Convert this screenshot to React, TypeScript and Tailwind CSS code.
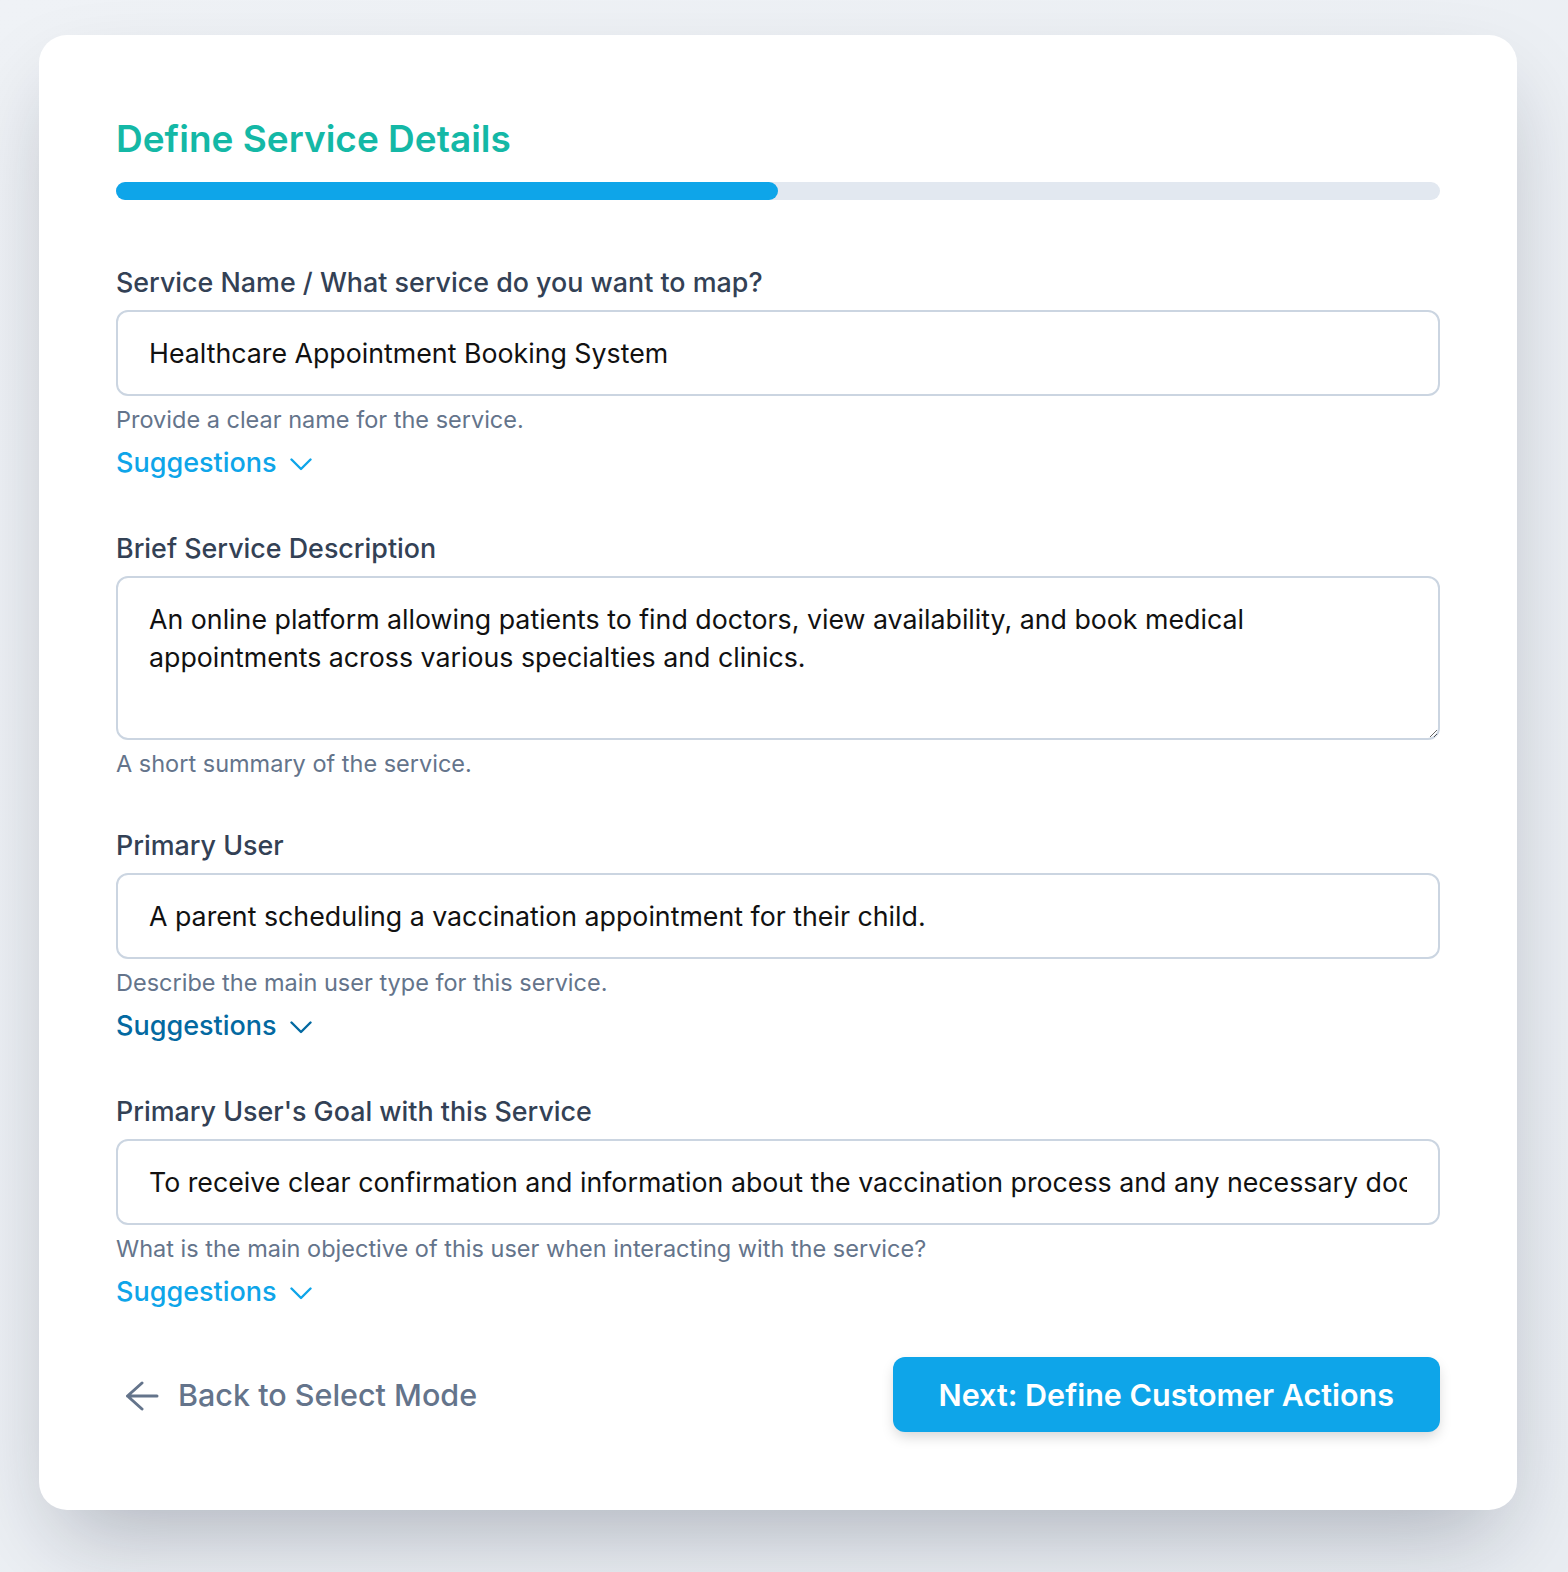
import { useState } from 'react';

type Field = {
  label: string;
  value: string;
  help: string;
  multiline?: boolean;
  suggestions?: 'light' | 'dark';
};

const fields: Field[] = [
  {
    label: 'Service Name / What service do you want to map?',
    value: 'Healthcare Appointment Booking System',
    help: 'Provide a clear name for the service.',
    suggestions: 'light',
  },
  {
    label: 'Brief Service Description',
    value:
      'An online platform allowing patients to find doctors, view availability, and book medical appointments across various specialties and clinics.',
    help: 'A short summary of the service.',
    multiline: true,
  },
  {
    label: 'Primary User',
    value: 'A parent scheduling a vaccination appointment for their child.',
    help: 'Describe the main user type for this service.',
    suggestions: 'dark',
  },
  {
    label: "Primary User's Goal with this Service",
    value:
      'To receive clear confirmation and information about the vaccination process and any necessary documentation.',
    help: 'What is the main objective of this user when interacting with the service?',
    suggestions: 'light',
  },
];

function Chevron() {
  return (
    <svg width="22" height="13" viewBox="0 0 22 13" fill="none" className="ml-[13px] mt-[3px]">
      <path d="M1.5 1.5l9.5 9.5 9.5-9.5" stroke="currentColor" strokeWidth="2.4" strokeLinecap="round" strokeLinejoin="round" />
    </svg>
  );
}

function FieldBlock({ field }: { field: Field }) {
  const [value, setValue] = useState(field.value);
  const inputCls =
    'w-full rounded-[12px] border-2 border-[#cbd5e1] bg-white px-[31px] text-[26.75px] text-[#111111] outline-none';

  return (
    <div className="flex flex-col">
      <label className="mb-[8px] text-[26.85px] leading-[40px] font-medium text-[#334155]">{field.label}</label>
      {field.multiline ? (
        <textarea
          value={value}
          onChange={(e) => setValue(e.target.value)}
          className={`${inputCls} h-[164px] py-[22px] leading-[38px]`}
        />
      ) : (
        <input
          value={value}
          onChange={(e) => setValue(e.target.value)}
          className={`${inputCls} h-[86px] leading-[38px]`}
        />
      )}
      <p className="mt-[8px] text-[23.5px] leading-[32px] text-[#64748b]">{field.help}</p>
      {field.suggestions && (
        <button
          className={`mt-[7px] flex items-center self-start text-[27px] leading-[40px] font-medium ${
            field.suggestions === 'dark' ? 'text-[#0369a1]' : 'text-[#0ea5e9]'
          }`}
        >
          Suggestions
          <Chevron />
        </button>
      )}
    </div>
  );
}

export default function App() {
  return (
    <div
      className="min-h-screen bg-gradient-to-br from-[#eff2f6] to-[#e9edf2] pl-[39px] pt-[35px] pb-[62px]"
      style={{ fontFamily: 'Inter, "Noto Sans", sans-serif' }}
    >
      <div className="w-[1478px] rounded-[28px] bg-white px-[77px] pt-[76px] pb-[78px] shadow-[0_40px_90px_-20px_rgba(15,23,42,0.28)]">
        <h1 className="text-[37px] leading-[56px] font-semibold text-[#14b8a6]">Define Service Details</h1>

        {/* Progress */}
        <div className="mt-[15px] h-[18px] w-full rounded-full bg-[#e2e8f0]">
          <div className="h-full w-1/2 rounded-full bg-[#0ea5e9]" />
        </div>

        <div className="mt-[62px] flex flex-col gap-[45px]">
          {fields.map((f) => (
            <FieldBlock key={f.label} field={f} />
          ))}
        </div>

        <div className="mt-[45px] flex items-center justify-between">
          <button className="flex items-center pl-[9px] text-[30.5px] leading-[48px] font-medium text-[#64748b]">
            <svg width="34" height="30" viewBox="0 0 34 30" fill="none" className="mr-[19px] mt-[2px]">
              <path d="M32 15H2.5M17 2L2.5 15 17 28" stroke="currentColor" strokeWidth="3" strokeLinecap="round" strokeLinejoin="round" />
            </svg>
            Back to Select Mode
          </button>
          <button className="h-[75px] rounded-[12px] bg-[#0ea5e9] px-[46px] text-[30.5px] font-semibold text-white shadow-[0_6px_14px_-2px_rgba(0,0,0,0.18)]">
            Next: Define Customer Actions
          </button>
        </div>
      </div>
    </div>
  );
}
